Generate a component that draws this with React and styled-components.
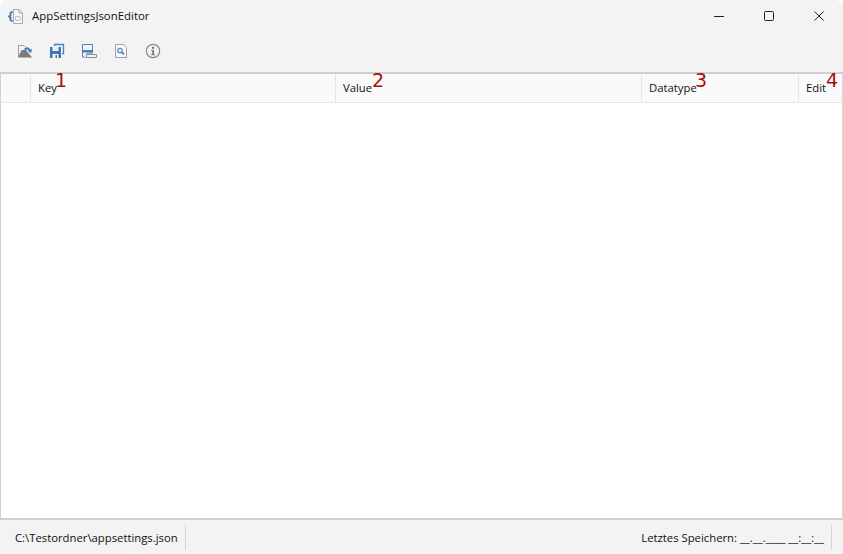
import React from 'react'
import styled, { createGlobalStyle } from 'styled-components'

const GlobalStyle = createGlobalStyle`
  html, body {
    margin: 0;
    padding: 0;
    background: #ffffff;
  }
`

const Window = styled.div`
  width: 843px;
  height: 554px;
  display: flex;
  flex-direction: column;
  overflow: hidden;
  background: #f3f3f3;
  border-radius: 8px 8px 0 0;
  font-family: 'Open Sans', 'Noto Sans', 'Liberation Sans', sans-serif;
  font-size: 11.3px;
  color: #111;
`

const TitleBar = styled.div`
  height: 32px;
  flex: none;
  display: flex;
  align-items: center;
  padding-left: 8px;
`

const AppTitle = styled.span`
  margin: -1px 0 0 7px;
  font-size: 11.4px;
`

const WindowButtons = styled.div`
  margin-left: auto;
  margin-right: -1px;
  display: flex;
`

const WindowButton = styled.div`
  width: 50px;
  height: 32px;
  display: flex;
  align-items: center;
  justify-content: center;
  svg {
    display: block;
  }
`

const Toolbar = styled.div`
  height: 40px;
  flex: none;
  display: flex;
  align-items: center;
  padding: 0 0 2px 17px;
  gap: 16px;
  box-sizing: border-box;
`

const ToolButton = styled.div`
  width: 16px;
  height: 16px;
  svg {
    display: block;
  }
`

const Grid = styled.div`
  flex: 1;
  display: flex;
  flex-direction: column;
  background: #fff;
  border: 1px solid #d0d0d0;
  border-top: 2px solid #d0d0d0;
  border-bottom: 2px solid #d0d0d0;
  border-right-color: #d8d8d8;
`

const HeaderRow = styled.div`
  height: 28px;
  display: flex;
  background: #fafafa;
  border-bottom: 1px solid #e6e6e6;
`

const HeaderCell = styled.div`
  position: relative;
  width: ${p => p.$width}px;
  flex: ${p => (p.$grow ? 1 : 'none')};
  box-sizing: border-box;
  display: flex;
  align-items: center;
  padding: 0 0 1px 7px;
  border-right: ${p => (p.$last ? 'none' : '1px solid #e4e4e4')};
`

const Marker = styled.span`
  position: absolute;
  top: -4px;
  left: ${p => p.$left}px;
  font-family: 'DejaVu Sans', sans-serif;
  font-size: 19px;
  line-height: 20px;
  color: #a80d12;
`

const StatusBar = styled.div`
  height: 34px;
  flex: none;
  display: flex;
  align-items: center;
  justify-content: space-between;
  padding: 0 11px 0 15px;
`

const StatusPanel = styled.div`
  height: 25px;
  display: flex;
  align-items: center;
  padding-right: 7px;
  border-right: 1px solid #d4d4d4;
`

const AppIcon = () => (
  <svg width="17" height="17" viewBox="0 0 17 17">
    <path d="M4.500 3.500 2.500 5v2.500l-1.500 1 1.500 1V12l2 1.500" fill="none" stroke="#4d7fb8" strokeWidth="2" />
    <path d="M5.500 1.500h5.500l3.500 3.500v10.500h-9z" fill="#f7f7f7" stroke="#a9a9a9" />
    <path d="M11 1.500V5h3.500" fill="#e0e0e0" stroke="#a9a9a9" />
    <path d="M7.500 8.500h4.500v4H7.500z" fill="none" stroke="#c4c4c4" />
  </svg>
)

const OpenIcon = () => (
  <svg width="16" height="16" viewBox="0 0 16 16">
    <path d="M1.500 14V2.500h5.500l1.500 1.500" fill="none" stroke="#a0a0a0" />
    <path d="M1 14.500 4.500 7h4.500l6 7.500z" fill="#7c7c7c" />
    <path d="M7 6A3.500 3.500 0 0 1 13.200 6.500l1.800-.5-1 4-3.300-2 1.200-.5A2.200 2.200 0 0 0 8.500 7.500z" fill="#3f7ebf" />
  </svg>
)

const SaveAllIcon = () => (
  <svg width="16" height="16" viewBox="0 0 16 16">
    <path d="M5.500 3V1.500h9v9H13" fill="none" stroke="#4a82bf" strokeWidth="1.300" />
    <path d="M1 4h11v11H1z" fill="#3f78b6" />
    <path d="M3.500 4h6v4h-6z" fill="#e9eff6" />
    <path d="M3.500 11h6v4h-6z" fill="#f3f3f3" />
    <path d="M6.500 12h1.500v3H6.500z" fill="#3f78b6" />
  </svg>
)

const SaveAsIcon = () => (
  <svg width="16" height="16" viewBox="0 0 16 16">
    <path d="M1.500 1.500h10v8.500h-5.500v4H1.500z" fill="#f3f3f3" stroke="#4a82bf" />
    <path d="M1 7h11v2.500H1z" fill="#4a82bf" />
    <path d="M3.500 10h2v4h-2z" fill="#e9eff6" />
    <path d="M5.500 11.500h10v3h-10z" fill="#f5f5f5" stroke="#8a8a8a" />
  </svg>
)

const PreviewIcon = () => (
  <svg width="16" height="16" viewBox="0 0 16 16">
    <path d="M2.500 1.500h8l3 3v10h-11z" fill="#f9f9f9" stroke="#9aa0a6" />
    <circle cx="7" cy="7.500" r="2.300" fill="#e4eef8" stroke="#4a88c4" strokeWidth="1.100" />
    <path d="m8.800 9.300 2.200 2.200" stroke="#2f6aa8" strokeWidth="1.600" />
  </svg>
)

const InfoIcon = () => (
  <svg width="16" height="16" viewBox="0 0 16 16">
    <circle cx="8" cy="8" r="6.700" fill="none" stroke="#8a8a8a" strokeWidth="1.200" />
    <rect x="7" y="3.800" width="2" height="2" fill="#777" />
    <path d="M6.300 7h2.700v4.300h1v1H6.200v-1h1.100V8H6.300z" fill="#777" />
  </svg>
)

const columns = [
  { label: '', width: 30 },
  { label: 'Key', width: 305, marker: '1', left: 24 },
  { label: 'Value', width: 306, marker: '2', left: 36 },
  { label: 'Datatype', width: 157, marker: '3', left: 53 },
  { label: 'Edit', grow: true, last: true, marker: '4', left: 27 }
]

const App = () => (
  <>
    <GlobalStyle />
    <Window>
      <TitleBar>
        <AppIcon />
        <AppTitle>AppSettingsJsonEditor</AppTitle>
        <WindowButtons>
          <WindowButton>
            <svg width="10" height="10" viewBox="0 0 10 10">
              <path d="M0 5.500h10" stroke="#222" />
            </svg>
          </WindowButton>
          <WindowButton>
            <svg width="10" height="10" viewBox="0 0 10 10">
              <rect x=".5" y=".5" width="9" height="9" rx="1" fill="none" stroke="#222" />
            </svg>
          </WindowButton>
          <WindowButton>
            <svg width="10" height="10" viewBox="0 0 10 10">
              <path d="m.5.500 9 9m0-9-9 9" stroke="#222" />
            </svg>
          </WindowButton>
        </WindowButtons>
      </TitleBar>
      <Toolbar>
        <ToolButton><OpenIcon /></ToolButton>
        <ToolButton><SaveAllIcon /></ToolButton>
        <ToolButton><SaveAsIcon /></ToolButton>
        <ToolButton><PreviewIcon /></ToolButton>
        <ToolButton><InfoIcon /></ToolButton>
      </Toolbar>
      <Grid>
        <HeaderRow>
          {columns.map(col => (
            <HeaderCell key={col.label || 'row'} $width={col.width} $grow={col.grow} $last={col.last}>
              {col.label}
              {col.marker && <Marker $left={col.left}>{col.marker}</Marker>}
            </HeaderCell>
          ))}
        </HeaderRow>
      </Grid>
      <StatusBar>
        <StatusPanel>C:\Testordner\appsettings.json</StatusPanel>
        <StatusPanel>Letztes Speichern: __.__.____ __:__:__</StatusPanel>
      </StatusBar>
    </Window>
  </>
)

export default App
